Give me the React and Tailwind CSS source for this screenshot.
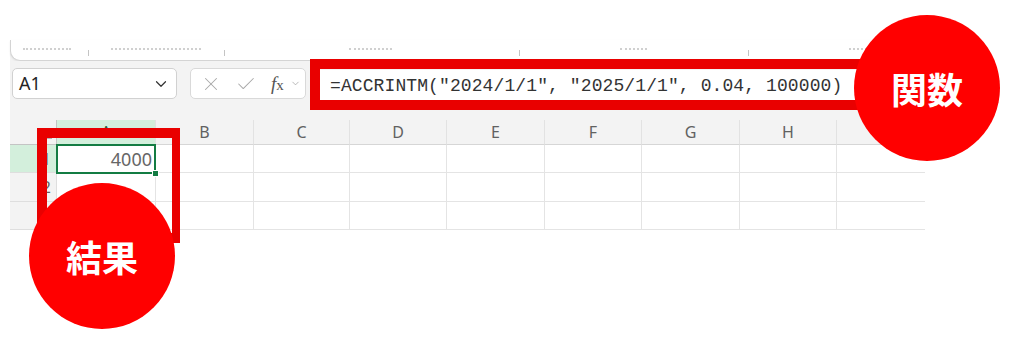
import { X, Check, ChevronDown } from "lucide-react";

const COLS = ["A", "B", "C", "D", "E", "F", "G", "H", ""];

const Frag = ({ w, ml }) => (
  <div className={`${ml} ${w} mt-[8px] h-[2px] border-t-2 border-dotted border-[#d0d0d0]`} />
);

const Sep = ({ ml }) => <div className={`${ml} mt-[10px] h-[6px] w-px bg-[#c4c4c4]`} />;

function RibbonStrip() {
  return (
    <div className="flex h-[21px] rounded-b-[10px] border-b border-l border-[#d4d4d4] bg-white shadow-[0_1px_2px_rgba(0,0,0,0.08)]">
      <Frag ml="ml-[12px]" w="w-[48px]" />
      <Sep ml="ml-[17px]" />
      <Frag ml="ml-[22px]" w="w-[90px]" />
      <Sep ml="ml-[23px]" />
      <Frag ml="ml-[124px]" w="w-[43px]" />
      <Sep ml="ml-[127px]" />
      <Frag ml="ml-[100px]" w="w-[27px]" />
      <Sep ml="ml-[101px]" />
      <Frag ml="ml-[100px]" w="w-[18px]" />
    </div>
  );
}

function Toolbar() {
  return (
    <div className="flex h-[59px] items-start bg-[#f3f3f3] pl-[2px] pt-[7px]">
      <div className="flex h-[31px] w-[165px] items-center justify-between rounded-[5px] border border-[#d1d1d1] bg-white pl-[6px] pr-[6px]">
        <span className="text-[18px] text-[#242424] [font-family:'Noto_Sans',sans-serif]">A1</span>
        <ChevronDown size={18} strokeWidth={1.6} className="text-[#333]" />
      </div>
      <div className="ml-[13px] flex h-[31px] w-[116px] items-center rounded-[5px] border border-[#d9d9d9] bg-white pl-[9px]">
        <X size={22} strokeWidth={1.1} className="text-[#a8a8a8]" />
        <Check size={22} strokeWidth={1.1} className="ml-[13px] text-[#a8a8a8]" />
        <span className="ml-[14px] text-[19px] leading-none text-[#555] [font-family:'Liberation_Serif',serif]">
          <i>f</i>
          <span className="text-[15px]">x</span>
        </span>
        <ChevronDown size={11} strokeWidth={1.5} className="ml-[6px] text-[#9a9a9a]" />
      </div>
      <div className="ml-[12px] mt-[2px] flex h-[31px] w-[545px] items-center bg-white pl-[12px]">
        <span className="text-[18px] leading-none tracking-[0.1px] text-[#333] [font-family:'Liberation_Mono',monospace]">
          =ACCRINTM("2024/1/1", "2025/1/1", 0.04, 100000)
        </span>
      </div>
    </div>
  );
}

function Grid() {
  const rowHeights = ["h-[28px]", "h-[29px]", "h-[28px]"];
  return (
    <div className="grid grid-cols-[47px_99px_98px_96px_97px_98px_97px_98px_97px_88px] bg-white text-[16px] [font-family:'Noto_Sans',sans-serif]">
      <div className="relative h-[25px] border-b border-r border-[#c4c4c4] bg-[#f3f3f3]">
        <svg width="6" height="6" viewBox="0 0 6 6" className="absolute bottom-[5px] right-[4px]">
          <path d="M6 0 L6 6 L0 6 Z" fill="#b3b3b3" />
        </svg>
      </div>
      {COLS.map((c, i) => (
        <div
          key={`h${i}`}
          className={`flex h-[25px] items-center justify-center border-b border-[#d6d6d6] ${
            i === 0 ? "bg-[#d3efdc] text-[#2e5e3e]" : "bg-[#f3f3f3] text-[#616161]"
          } ${i < 8 ? "border-r border-r-[#e2e2e2]" : ""}`}
        >
          {c}
        </div>
      ))}
      {rowHeights.map((h, r) => (
        <Row key={r} r={r} h={h} />
      ))}
    </div>
  );
}

function Row({ r, h }) {
  return (
    <>
      <div
        className={`${h} flex items-center justify-end border-b border-r border-[#dedede] pr-[5px] text-[#616161] ${
          r === 0 ? "bg-[#d3efdc]" : "bg-[#f3f3f3]"
        }`}
      >
        {r < 2 ? r + 1 : ""}
      </div>
      {COLS.map((c, i) => (
        <div
          key={`${r}-${i}`}
          className={`${h} relative border-b border-[#e4e4e4] ${i < 8 ? "border-r" : ""} ${
            r === 0 && i === 0 ? "z-10" : ""
          }`}
        >
          {r === 0 && i === 0 && (
            <div className="absolute -left-[1px] -top-[1px] flex h-[30px] w-[100px] items-center justify-end border-2 border-[#137c43] pr-[2px] text-[18px] text-[#666]">
              4000
              <div className="absolute -bottom-[5px] -right-[5px] h-[7px] w-[7px] border border-white bg-[#137c43]" />
            </div>
          )}
        </div>
      ))}
    </>
  );
}

function Badge({ label, pos }) {
  return (
    <div
      className={`absolute ${pos} z-20 flex h-[146px] w-[146px] items-center justify-center rounded-full bg-[#ff0000] text-[36px] font-bold text-white [font-family:'Noto_Sans_CJK_JP',sans-serif]`}
    >
      {label}
    </div>
  );
}

export default function App() {
  return (
    <div className="relative h-[358px] w-[1024px] overflow-hidden bg-white">
      <div className="ml-[10px] mt-[40px] w-[915px] bg-[#f3f3f3]">
        <RibbonStrip />
        <Toolbar />
        <Grid />
      </div>

      <div className="pointer-events-none absolute left-[310px] top-[59px] z-20 h-[51px] w-[560px] border-[10px] border-[#e90000]" />
      <div className="pointer-events-none absolute left-[37px] top-[128px] z-20 h-[115px] w-[143px] border-[10px] border-r-[8px] border-[#e90000]" />

      <Badge label="関数" pos="left-[854px] top-[15px]" />
      <Badge label="結果" pos="left-[29px] top-[183px]" />
    </div>
  );
}
